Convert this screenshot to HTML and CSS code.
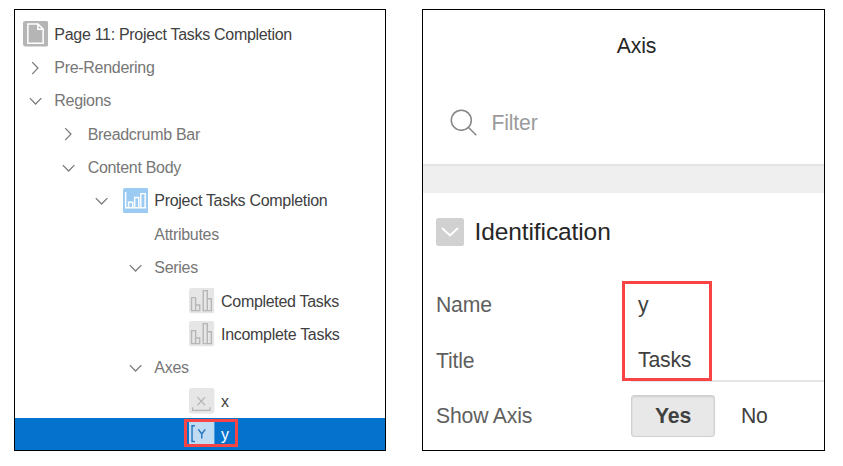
FILE: index.html
```html
<!DOCTYPE html>
<html lang="en">
<head>
<meta charset="utf-8">
<title>Page Designer</title>
<link rel="stylesheet" href="styles.css">
</head>
<body>
<svg class="defs" width="0" height="0">
  <symbol id="right" viewBox="0 0 25 25"><path d="M9 7l5.7 5.9L9 18.8" fill="none" stroke="#7b7b7b" stroke-width="1.3"/></symbol>
  <symbol id="down" viewBox="0 0 25 25"><path d="M6.7 10l5.7 5.7 5.7-5.7" fill="none" stroke="#7b7b7b" stroke-width="1.3"/></symbol>
  <symbol id="bars" viewBox="0 0 25 25"><rect width="25" height="25" rx="2" fill="#e6e6e6"/><path d="M2.5 22.3V9.5h4v12.8M6.5 16.8h4v5.5M14 22.3V2.6h4v19.7M18 10.5h4v11.8M2 22.3h8.5M13.4 22.3h9.2" fill="none" stroke="#b5b7b5" stroke-width="1.4"/></symbol>
</svg>
<main class="stage">
  <section class="panel tree">
    <div class="row strong"><span class="slot"><svg class="icon" viewBox="0 0 25 25"><rect width="25" height="25" rx="2" fill="#b5b5b5"/><path d="M4.8 3h10l5 5v14h-15zM14.7 3v5.2h5" fill="none" stroke="#fff" stroke-width="1.5"/></svg></span><span class="label">Page 11: Project Tasks Completion</span></div>
    <div class="row"><span class="slot"><svg class="icon"><use href="#right"/></svg></span><span class="label">Pre-Rendering</span></div>
    <div class="row"><span class="slot"><svg class="icon"><use href="#down"/></svg></span><span class="label">Regions</span></div>
    <div class="row level1"><span class="slot"><svg class="icon"><use href="#right"/></svg></span><span class="label">Breadcrumb Bar</span></div>
    <div class="row level1"><span class="slot"><svg class="icon"><use href="#down"/></svg></span><span class="label">Content Body</span></div>
    <div class="row level2 strong"><span class="slot"><svg class="icon"><use href="#down"/></svg></span><span class="slot"><svg class="icon" viewBox="0 0 25 25"><rect width="25" height="25" rx="2" fill="#9bcbf2"/><path d="M2.6 4v15.5h20.2M5.5 19v-5h4v5M11.5 19V9.3h4V19M17.5 19V5.5h4.3V19" fill="none" stroke="#fff" stroke-width="1.4"/></svg></span><span class="label">Project Tasks Completion</span></div>
    <div class="row level4"><span class="label">Attributes</span></div>
    <div class="row level3"><span class="slot"><svg class="icon"><use href="#down"/></svg></span><span class="label">Series</span></div>
    <div class="row level5 strong"><span class="slot"><svg class="icon"><use href="#bars"/></svg></span><span class="label">Completed Tasks</span></div>
    <div class="row level5 strong"><span class="slot"><svg class="icon"><use href="#bars"/></svg></span><span class="label">Incomplete Tasks</span></div>
    <div class="row level3"><span class="slot"><svg class="icon"><use href="#down"/></svg></span><span class="label">Axes</span></div>
    <div class="row level5 strong"><span class="slot"><svg class="icon" viewBox="0 0 25 25"><rect width="25" height="25" rx="2" fill="#e6e6e6"/><path d="M8.3 9l7.5 8M15.8 9l-7.5 8M3.5 19v3h17.2v-3" fill="none" stroke="#b5b5b5" stroke-width="1.2"/></svg></span><span class="label">x</span></div>
    <div class="row level5 selected"><span class="slot"><svg class="icon" viewBox="0 0 25 25"><rect width="25" height="25" fill="#c0dbf2"/><path d="M5.8 4.6H3v15.6h2.8M9.2 8.2l3.4 4.6 3.4-4.6M12.6 12.8v4.4" fill="none" stroke="#2474bf" stroke-width="1.4"/></svg></span><span class="label">y</span><i class="mark mark-axis"></i></div>
  </section>

  <section class="panel props">
    <h1 class="title">Axis</h1>
    <div class="filter"><svg class="search" viewBox="0 0 28 28"><circle cx="11.3" cy="11.2" r="10" fill="none" stroke="#858585" stroke-width="1.5"/><path d="M18.3 18.2l8 8" stroke="#858585" stroke-width="1.5"/></svg><span>Filter</span></div>
    <div class="band"></div>
    <h2 class="group"><svg class="collapse" viewBox="0 0 28 28"><rect width="28" height="28" rx="2.5" fill="#d1d1d1"/><path d="M6 10l8 7.5 8-7.5" fill="none" stroke="#fff" stroke-width="2"/></svg>Identification</h2>
    <div class="fields">
      <div class="field"><span class="name">Name</span><span class="value">y</span></div>
      <div class="field"><span class="name">Title</span><span class="value underlined">Tasks</span></div>
      <div class="field"><span class="name">Show Axis</span><span class="yes">Yes</span><span class="no">No</span></div>
      <i class="mark mark-values"></i>
    </div>
  </section>
</main>
</body>
</html>
```
FILE: styles.css
```css
* { box-sizing: border-box; }
body { margin: 0; background: #fff; font-family: "Liberation Sans", Arial, sans-serif; }
.defs { position: absolute; }
.stage { display: flex; gap: 36px; padding: 9px 0 0 14px; }
.panel { height: 442px; border: 1px solid #000; overflow: hidden; }
.tree { width: 372px; padding-top: 7.4px; font-size: 16px; letter-spacing: -0.3px; color: #767676; }
.row { position: relative; display: flex; align-items: center; height: 33.35px; padding-left: 7.7px; white-space: nowrap; }
.level1 { padding-left: 41px; }
.level2 { padding-left: 74.4px; }
.level3 { padding-left: 107.7px; }
.level4 { padding-left: 141px; }
.level5 { padding-left: 174.4px; }
.slot { display: flex; flex: none; width: 33.33px; }
.icon { width: 25.4px; height: 25.4px; }
.label { margin-left: -1.7px; padding-top: 1.4px; }
.strong { color: #404040; }
.selected { color: #fff; background: #0572ce; }
.mark { position: absolute; border: 3px solid #f84444; }
.mark-axis { left: 169px; top: 1.5px; width: 54px; height: 28px; }

.props { width: 403px; font-size: 21.2px; letter-spacing: -0.18px; color: #5f5f5f; }
.title { margin: 0; height: 70px; line-height: 71px; padding-left: 26px; text-align: center; font-size: 21.2px; font-weight: 400; color: #262626; }
.filter { display: flex; align-items: center; gap: 13.5px; height: 84px; padding: 2px 0 0 27px; color: #9b9b9b; }
.search { width: 28px; height: 28px; }
.band { height: 29px; background: #efefef; border-top: 2px solid #e4e4e4; }
.group { display: flex; align-items: center; gap: 10.5px; height: 78px; margin: 0; padding-left: 13px; font-size: 24.5px; letter-spacing: -0.1px; font-weight: 400; color: #262626; }
.collapse { width: 28px; height: 28px; }
.fields { position: relative; padding-top: 6px; }
.field { display: flex; align-items: center; height: 55.6px; padding-left: 13px; }
.name { width: 195px; padding-top: 1px; }
.value { flex: 1; height: 44px; line-height: 44px; padding-left: 7px; color: #404040; }
.underlined { box-shadow: 0 -2px #e6e6e6 inset; }
.yes { width: 84px; height: 42px; line-height: 40px; border: 1px solid #d0d0d0; border-radius: 3px; background: #e8e8e8; box-shadow: inset 0 1px 2px #ccc; text-align: center; font-weight: 700; color: #404040; }
.no { margin-left: 26px; padding-top: 1px; color: #404040; }
.mark-values { left: 199px; top: 9.6px; width: 90px; height: 100px; }
```
